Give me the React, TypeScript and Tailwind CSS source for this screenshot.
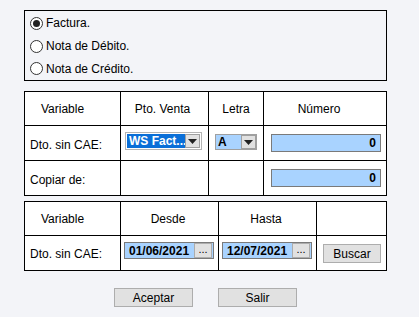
import React from 'react'

const Radio = ({ checked, label }: { checked?: boolean; label: string }) => (
    <label className="flex items-center h-[23px] gap-[3px]">
        <span className="w-[13px] h-[13px] rounded-full border border-[#333] bg-white flex items-center justify-center">
            {checked && <span className="w-[7px] h-[7px] rounded-full bg-[#222]" />}
        </span>
        <span>{label}</span>
    </label>
)

const Arrow = () => (
    <span className="w-[15px] h-full bg-[#e1e1e1] border border-[#a0a0a0] flex items-center justify-center">
        <svg width="9" height="5" viewBox="0 0 9 5">
            <path d="M0 0 H9 L4.5 5 Z" fill="#222" />
        </svg>
    </span>
)

const NumInput = ({ value }: { value: string }) => (
    <div className="w-[110px] h-[18px] border border-[#7a7a7a] bg-[#a9d3ff] flex items-center justify-end pr-[4px] font-bold">
        {value}
    </div>
)

const DateInput = ({ value }: { value: string }) => (
    <div className="w-[90px] h-[17px] border border-[#7a7a7a] bg-[#a9d3ff] flex items-center">
        <span className="flex-1 pl-[4px] font-bold leading-none">{value}</span>
        <span className="w-[18px] h-[15px] mr-px bg-[#e1e1e1] border border-[#adadad] text-[11px] leading-none flex items-end justify-center pb-[2px]">...</span>
    </div>
)

const Btn = ({ label, w }: { label: string; w: string }) => (
    <button className={`${w} h-[19px] bg-[#e1e1e1] border border-[#adadad] text-[12px] leading-none text-black`}>
        {label}
    </button>
)

export default function App() {
    return (
        <div
            className="w-[419px] h-[317px] bg-[#f3f4f8] text-[12px] text-black overflow-hidden"
            style={{ fontFamily: '"Liberation Sans", Arial, sans-serif' }}
        >
            {/* tipo de comprobante */}
            <div className="ml-[24px] mt-[10px] w-[363px] h-[71px] border border-black pl-[5px] pt-px flex flex-col">
                <Radio checked label="Factura." />
                <Radio label="Nota de Débito." />
                <Radio label="Nota de Crédito." />
            </div>

            {/* comprobante */}
            <div className="ml-[24px] mt-[10px] w-[363px] bg-black p-px grid grid-cols-[95px_87px_54px_122px] grid-rows-[33px_34px_34px] gap-px">
                <div className="bg-white flex items-center pl-[16px]">Variable</div>
                <div className="bg-white flex items-center justify-center pr-[4px]">Pto. Venta</div>
                <div className="bg-white flex items-center justify-center">Letra</div>
                <div className="bg-white flex items-center justify-center pr-[12px]">Número</div>

                <div className="bg-white flex items-center pl-[5px] pt-[3px]">Dto. sin CAE:</div>
                <div className="bg-white pl-[4px] pt-[6px]">
                    <div className="w-[77px] h-[18px] border border-[#b4b4b4] bg-white flex p-px">
                        <span className="flex-1 bg-[#0a6fd8] text-white font-bold leading-none flex items-center pl-[2px] overflow-hidden whitespace-nowrap">WS Fact...</span>
                        <Arrow />
                    </div>
                </div>
                <div className="bg-white pl-[6px] pt-[8px]">
                    <div className="w-[42px] h-[16px] border border-[#a0a0a0] bg-[#a9d3ff] flex">
                        <span className="flex-1 font-bold leading-none flex items-center pl-[2px]">A</span>
                        <Arrow />
                    </div>
                </div>
                <div className="bg-white pl-[7px] pt-[8px]">
                    <NumInput value="0" />
                </div>

                <div className="bg-white flex items-center pl-[5px] pt-[3px]">Copiar de:</div>
                <div className="bg-white" />
                <div className="bg-white" />
                <div className="bg-white pl-[7px] pt-[8px]">
                    <NumInput value="0" />
                </div>
            </div>

            {/* rango de fechas */}
            <div className="ml-[24px] mt-[5px] w-[363px] bg-black p-px grid grid-cols-[95px_97px_97px_69px] grid-rows-[33px_34px] gap-px">
                <div className="bg-white flex items-center pl-[16px]">Variable</div>
                <div className="bg-white flex items-center justify-center pr-[3px]">Desde</div>
                <div className="bg-white flex items-center justify-center pr-[3px]">Hasta</div>
                <div className="bg-white" />

                <div className="bg-white flex items-center pl-[5px] pt-[2px]">Dto. sin CAE:</div>
                <div className="bg-white pl-[3px] pt-[6px]">
                    <DateInput value="01/06/2021" />
                </div>
                <div className="bg-white pl-[3px] pt-[6px]">
                    <DateInput value="12/07/2021" />
                </div>
                <div className="bg-white pl-[6px] pt-[8px]">
                    <Btn label="Buscar" w="w-[58px]" />
                </div>
            </div>

            <div className="ml-[114px] mt-[17px] flex gap-[25px]">
                <Btn label="Aceptar" w="w-[79px]" />
                <Btn label="Salir" w="w-[79px]" />
            </div>
        </div>
    )
}
